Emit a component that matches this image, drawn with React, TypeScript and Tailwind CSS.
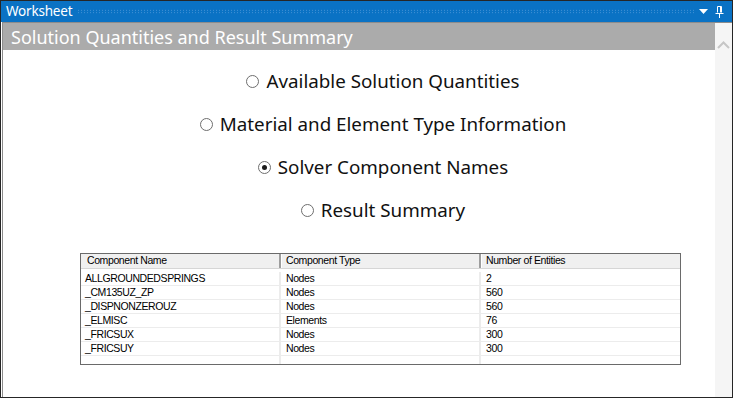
const options = [
  { label: 'Available Solution Quantities', checked: false },
  { label: 'Material and Element Type Information', checked: false },
  { label: 'Solver Component Names', checked: true },
  { label: 'Result Summary', checked: false },
]

const rows = [
  ['ALLGROUNDEDSPRINGS', 'Nodes', '2'],
  ['_CM135UZ_ZP', 'Nodes', '560'],
  ['_DISPNONZEROUZ', 'Nodes', '560'],
  ['_ELMISC', 'Elements', '76'],
  ['_FRICSUX', 'Nodes', '300'],
  ['_FRICSUY', 'Nodes', '300'],
]

function Radio({ checked }: { checked: boolean }) {
  return (
    <span className="w-[13px] h-[13px] rounded-full border border-[#6e6e6e] bg-white flex items-center justify-center shrink-0">
      {checked && <span className="w-[5px] h-[5px] rounded-full bg-[#1a1a1a]" />}
    </span>
  )
}

function PinIcon() {
  return (
    <svg width="9" height="12" viewBox="0 0 9 12" fill="none" stroke="white" strokeWidth="1">
      <path d="M2.5 0.5h4M2.5 0.5v6M6.5 0.5v6M5.5 0.5v6" />
      <path d="M0.5 7.5h8" />
      <path d="M4.5 8v4" />
    </svg>
  )
}

export default function App() {
  return (
    <div className="w-[733px] h-[398px] border border-[#262626] bg-white flex flex-col overflow-hidden font-['Noto_Sans',sans-serif]">
      {/* Title bar */}
      <div className="h-[21px] bg-[#0a72c4] flex items-center pl-[5px] pr-[8px] shrink-0">
        <span className="text-white text-[13.5px] leading-none tracking-[-0.2px]">Worksheet</span>
        <div className="flex-1 h-[5px] mx-[5px] bg-[radial-gradient(circle,#4d97d8_0.7px,transparent_0.8px)] bg-[length:3px_2.5px]" />
        <svg width="9" height="5" viewBox="0 0 9 5" className="mr-[7px]">
          <path d="M0 0h9L4.5 5z" fill="white" />
        </svg>
        <PinIcon />
      </div>

      <div className="flex-1 flex border-t border-l border-[#8c8c8c] ml-[1px] min-h-0">
        <div className="flex-1 flex flex-col min-w-0">
          <div className="h-[27px] bg-[#ababab] flex items-center pl-[8px] shrink-0">
            <span className="text-white text-[18px] leading-none">Solution Quantities and Result Summary</span>
          </div>

          <div className="pt-[10px] w-[604px] ml-[77px]">
            {options.map((o) => (
              <div key={o.label} className="h-[43px] flex items-center justify-center gap-[7px] pl-[2px]">
                <Radio checked={o.checked} />
                <span className="text-[18.8px] text-[#111] leading-none">{o.label}</span>
              </div>
            ))}

            <div className="mt-[21px] w-[601px] border border-[#6a6a6a] font-['Liberation_Sans',sans-serif] text-[10.5px] tracking-[-0.4px] text-black">
              <div className="flex h-[15px] bg-[#f0f0f0] border-b border-[#d6d6d6]">
                {['Component Name', 'Component Type', 'Number of Entities'].map((h, i) => (
                  <div
                    key={h}
                    className={
                      i === 0
                        ? 'w-[198px] flex items-center pl-[6px]'
                        : i === 1
                          ? 'w-[200px] flex items-center pl-[5px] border-l-2 border-l-[#9e9e9e] shadow-[inset_1px_0_0_white]'
                          : 'flex-1 flex items-center pl-[5px] border-l-2 border-l-[#9e9e9e] shadow-[inset_1px_0_0_white]'
                    }
                  >
                    {h}
                  </div>
                ))}
              </div>
              <div className="pt-[3px]">
                {rows.map((r) => (
                  <div key={r[0]} className="flex h-[14px] border-b border-[#ececec]">
                    <div className="w-[198px] pl-[4px] flex items-center">{r[0]}</div>
                    <div className="w-[200px] pl-[5px] flex items-center border-l-2 border-[#ececec]">{r[1]}</div>
                    <div className="flex-1 pl-[5px] flex items-center border-l-2 border-[#ececec]">{r[2]}</div>
                  </div>
                ))}
                <div className="flex h-[8px]">
                  <div className="w-[198px]" />
                  <div className="w-[200px] border-l-2 border-[#ececec]" />
                  <div className="flex-1 border-l-2 border-[#ececec]" />
                </div>
              </div>
            </div>
          </div>
        </div>

        <div className="w-[17px] bg-[#f5f5f5] flex justify-center pt-[18px] shrink-0">
          <svg width="13" height="8" viewBox="0 0 13 8" fill="none" stroke="#c6c6c6" strokeWidth="2">
            <path d="M1 7L6.5 1.5L12 7" />
          </svg>
        </div>
      </div>
    </div>
  )
}
